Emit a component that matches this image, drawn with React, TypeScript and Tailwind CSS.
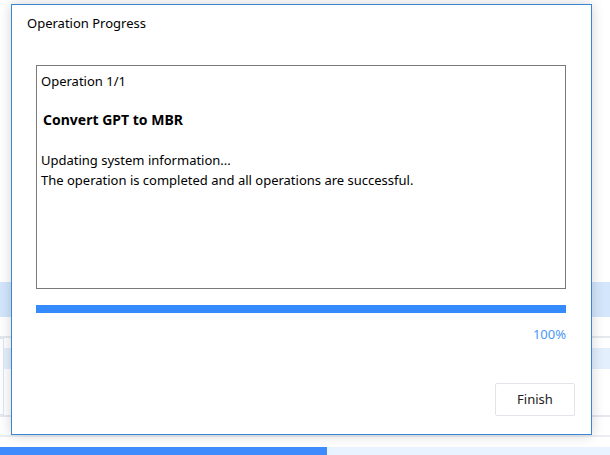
export default function App() {
  return (
    <div
      className="relative h-[455px] w-[610px] overflow-hidden bg-white text-[13px] text-black"
      style={{ fontFamily: '"Noto Sans", "Open Sans", sans-serif' }}
    >
      {/* app behind the dialog */}
      <div className="flex flex-col">
        <div className="h-[282px]" />
        <div className="h-[35px] bg-[#d3e6fb]" />
        <div className="h-[19px]" />
        <div className="h-[2px] bg-[#e6e9ee]" />
        <div className="flex h-[77px]">
          <div className="w-[4px] border-y border-r border-[#dbe6f7]" />
          <div className="flex flex-1 flex-col">
            <div className="h-[10px]" />
            <div className="h-[21px] bg-[#e4effd]" />
          </div>
        </div>
        <div className="h-[2px] bg-[#e6e9ee]" />
        <div className="h-[18px]" />
        <div className="h-[2px] bg-[#eceef1]" />
        <div className="h-[10px]" />
        <div className="flex h-[8px]">
          <div className="w-[327px] bg-[#3d8bfd]" />
          <div className="flex-1 bg-[#e9f3ff]" />
        </div>
      </div>

      {/* dialog */}
      <div className="absolute left-[11px] top-[4px] flex h-[431px] w-[581px] flex-col border border-[#3a86d0] bg-white pl-[24px] pr-[25px] shadow-[0_0_12px_rgba(0,0,0,0.18)]">
        <div className="-ml-[9px] pt-[8px] leading-[20px]">Operation Progress</div>
        <div className="mt-[32px] h-[224px] border border-[#7a7a7a] px-[4px] pt-[5px] leading-[20px]">
          <div>Operation 1/1</div>
          <div className="ml-[2px] mt-[19px] text-[14px] font-bold">Convert GPT to MBR</div>
          <div className="mt-[20px]">Updating system information...</div>
          <div>The operation is completed and all operations are successful.</div>
        </div>
        <div className="mt-[16px] h-[8px] bg-[#358bfd]" />
        <div className="mt-[12px] text-right leading-[18px] text-[#4a97f7]">100%</div>
        <div className="mt-[40px] flex justify-end">
          <button
            type="button"
            className="-mr-[9px] h-[33px] w-[80px] rounded-[2px] border border-[#e1e4e9] bg-white text-[#222]"
          >
            Finish
          </button>
        </div>
      </div>
    </div>
  )
}
